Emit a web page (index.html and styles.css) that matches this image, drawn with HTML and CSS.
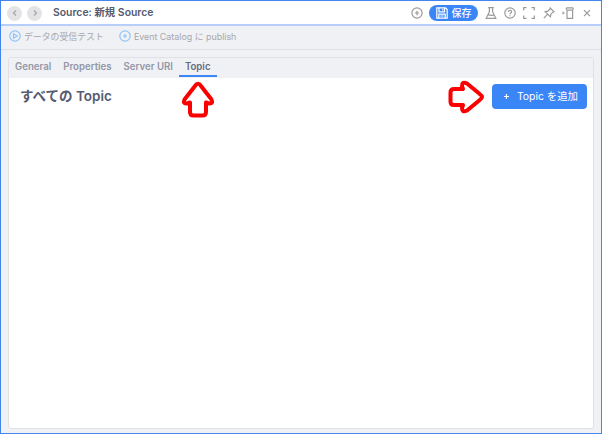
FILE: index.html
```html
<!DOCTYPE html>
<html lang="ja">
<head>
<meta charset="utf-8">
<title>Source: 新規 Source</title>
<link rel="stylesheet" href="styles.css">
</head>
<body>
<div class="window">
  <header class="titlebar">
    <span class="nav"><svg width="14" height="14" viewBox="0 0 14 14"><path d="M8 4.500 5.500 7 8 9.500"/></svg></span>
    <span class="nav"><svg width="14" height="14" viewBox="0 0 14 14"><path d="M6 4.500 8.500 7 6 9.500"/></svg></span>
    <h1 class="title">Source: 新規 Source</h1>
    <div class="actions">
      <svg width="12" height="12" viewBox="0 0 12 12"><circle cx="6" cy="6" r="5.100"/><path d="M6 3.800v4.400M3.800 6h4.400"/></svg>
      <button class="save"><svg width="12" height="12" viewBox="0 0 12 12"><path d="M.8.8h8.700l1.700 1.700v8.700H.8zM3 .8v4.100h5.600V.8M6.800 2v1.600M2.800 11V7.200h6.400V11M4.400 9h3.200"/></svg><span>保存</span></button>
      <svg class="flask" width="12" height="12" viewBox="0 0 12 12"><path d="M3.200.7h5.600M4.400.7v4L1.200 11.300h9.600L7.600 4.700v-4M2.800 8.200C4.500 7 6.500 9.200 9.200 8"/></svg>
      <svg class="help" width="12" height="12" viewBox="0 0 12 12"><circle cx="6" cy="6" r="5.200"/><path d="M4.400 4.900c0-2.100 3.300-2 3.200 0C7.600 6 6 5.900 6 7.200M6 8.200v1"/></svg>
      <svg class="full" width="12" height="12" viewBox="0 0 12 12"><path d="M.7 3.500V.7h2.800M8.500.7h2.800v2.800M11.300 8.500v2.800H8.500M3.500 11.300H.7V8.500"/></svg>
      <svg class="pin" width="12" height="12" viewBox="0 0 12 12"><path d="M7.200 1 11 4.800 9.900 5.200 7.900 7.200 7.400 9.800 2.200 4.600 4.800 4.100 6.800 2.100zM4.800 7.200.8 11.200"/></svg>
      <svg class="dock" width="12" height="12" viewBox="0 0 12 12"><path d="M5 3.200h5.600v8.100H5zM4.300.9h7M4.400.9v1.500M11.200.9v1.500"/><path class="solid" d="M.5 4.200 2.800 6 .5 7.800z"/></svg>
      <svg class="close" width="12" height="12" viewBox="0 0 12 12"><path d="m3 3.200 6 6m0-6-6 6"/></svg>
    </div>
  </header>
  <div class="toolbar">
    <span class="tool"><svg width="12" height="12" viewBox="0 0 12 12"><circle cx="6" cy="6" r="5.200"/><path d="M4.500 3.700 8.300 6 4.500 8.300z"/></svg><span class="test">データの受信テスト</span></span>
    <span class="tool"><svg width="12" height="12" viewBox="0 0 12 12"><circle cx="6" cy="6" r="5.200"/><path d="M6 4v4M4 6h4"/></svg><span class="publish">Event Catalog に publish</span></span>
  </div>
  <main class="panel">
    <nav class="tabs">
      <span class="tab">General</span><span class="tab">Properties</span><span class="tab">Server URI</span><span class="tab active">Topic</span>
    </nav>
    <section class="content">
      <h2 class="heading">すべての Topic</h2>
      <button class="add"><svg width="7" height="7" viewBox="0 0 7 7"><path d="M3.500 1v5M1 3.500h5"/></svg><span>Topic を追加</span></button>
    </section>
  </main>
</div>
<svg class="callout up" width="34" height="38" viewBox="0 0 34 38"><path d="M17 2.800Q18.500 2.800 20 5L30.500 18.500Q32.500 23 28 22.500L25 21.500V31Q25 34.500 21.500 34.500H12.500Q9 34.500 9 31V21.500L6 22.500Q1.500 23 3.500 18.500L14 5Q15.500 2.800 17 2.800Z"/></svg>
<svg class="callout right" width="38" height="34" viewBox="0 0 38 34"><path d="M35 17Q35 15.500 32.500 13.800L20 3.500Q15 1 15 6L16 9H7Q3.500 9 3.500 12.500V21.500Q3.500 25 7 25H16L15 28Q15 33 20 30.500L32.500 20.200Q35 18.500 35 17Z"/></svg>
</body>
</html>
```
FILE: styles.css
```css
* { box-sizing: border-box; }
body {
  margin: 0;
  position: relative;
  font-family: Inter, "Noto Sans CJK JP", sans-serif;
  color: #555b70;
}
button { border: 0; padding: 0; font-family: inherit; color: #fff; background: #3b86f7; }
h1, h2 { margin: 0; }
svg { flex: none; fill: none; stroke: currentColor; stroke-width: 1.2; }
span, h1, h2 { white-space: nowrap; }

.window {
  width: 602px;
  height: 434px;
  display: flex;
  flex-direction: column;
  border: 1px solid #4385ef;
  background: #f0f1f5;
}
.titlebar {
  height: 25px;
  flex: none;
  display: flex;
  align-items: center;
  padding: 0 8px 0 6px;
  background: #fff;
  border-bottom: 2px solid #b7cefa;
}
.nav {
  width: 15px;
  height: 15px;
  margin: 1px 6px 0 0;
  display: flex;
  align-items: center;
  justify-content: center;
  border-radius: 50%;
  background: #e4e4e6;
  color: #a5a5a9;
}
.nav + .nav { margin-right: 5px; }
.nav:first-child { margin-right: 5px; }
.title { margin-left: 6px; padding-top: 1px; font-size: 10.400px; line-height: 16px; font-weight: 600; }
.actions { margin-left: auto; display: flex; align-items: center; color: #99999b; padding-top: 1px; }
.save {
  width: 49px;
  height: 16px;
  margin: 0 7px 0 6px;
  display: flex;
  align-items: center;
  justify-content: center;
  gap: 4px;
  border-radius: 8px;
  font-size: 10px;
  line-height: 16px;
  font-weight: 500;
}
.help, .full { margin-left: 7px; }
.pin { margin-left: 8px; }
.dock { margin-left: 7px; }
.close { margin-left: 7px; }
.solid { fill: currentColor; stroke: none; }

.toolbar {
  height: 24px;
  flex: none;
  display: flex;
  align-items: center;
  gap: 15px;
  padding: 0 8px 3px;
  border-bottom: 1px solid #dddfe4;
  color: #a6a7ac;
  font-size: 8.900px;
}
.tool { display: flex; align-items: center; gap: 3px; }
.tool svg { color: #91c4fa; }

.panel {
  flex: 1;
  margin: 7px 7px 4px;
  display: flex;
  flex-direction: column;
  border: 1px solid #dfe1e6;
  border-radius: 3px;
  overflow: hidden;
  background: #fff;
}
.tabs {
  height: 20px;
  flex: none;
  display: flex;
  background: #f0f1f5;
  color: #9297a6;
  font-size: 9.640px;
  font-weight: 600;
  line-height: 18px;
}
.tab { padding: 0 6px; }
.active { color: #666b7d; height: 19px; border-bottom: 2px solid #3b86f7; }
.content {
  display: flex;
  justify-content: space-between;
  align-items: flex-start;
  padding: 6px 6px 0 11px;
}
.heading { font-size: 13.500px; line-height: 25px; font-weight: 600; }
.add {
  width: 95px;
  height: 25px;
  display: flex;
  align-items: center;
  justify-content: flex-end;
  padding-right: 9px;
  gap: 7px;
  border-radius: 4px;
  font-size: 10.400px;
  line-height: 16px;
}
.callout { position: absolute; stroke: #fa0000; stroke-width: 4; fill: #fff; stroke-linejoin: round; }
.up { left: 181px; top: 81px; }
.right { left: 447px; top: 80px; }
```
